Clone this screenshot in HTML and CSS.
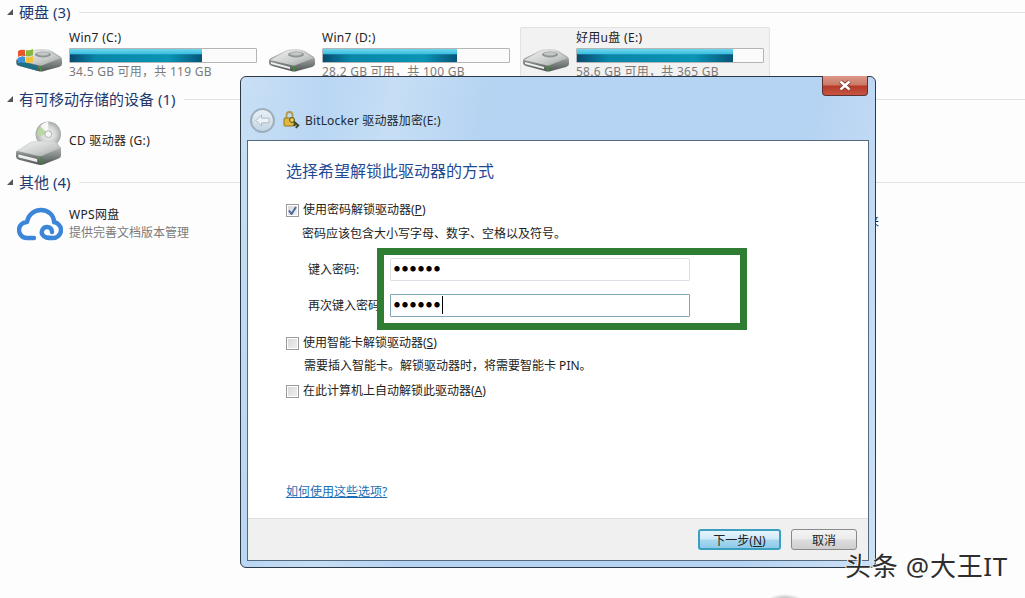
FILE: index.html
```html
<!DOCTYPE html>
<html lang="zh-CN">
  <head>
    <meta charset="UTF-8" />
    <title>BitLocker 驱动器加密(E:)</title>
    <link rel="stylesheet" href="styles.css">
  </head>
  <body>
    <svg class="defs" width="0" height="0">
      <defs>
        <linearGradient id="driveTop" x1="0" y1="0" x2="1" y2="1">
          <stop offset="0" stop-color="#f4f5f5" />
          <stop offset="0.6" stop-color="#c9cdcc" />
          <stop offset="1" stop-color="#9aa09e" />
        </linearGradient>
        <linearGradient id="driveSide" x1="0" y1="0" x2="0" y2="1">
          <stop offset="0" stop-color="#d5d8d7" />
          <stop offset="1" stop-color="#4d5452" />
        </linearGradient>
        <radialGradient id="disc" cx="0.5" cy="0.5" r="0.5">
          <stop offset="0" stop-color="#fafafa" />
          <stop offset="0.6" stop-color="#d3d6d5" />
          <stop offset="1" stop-color="#a5aaa9" />
        </radialGradient>
        <symbol id="drive" viewBox="0 0 46 24">
          <path d="M0 11 Q1 9 4 8 L18 1 Q22 0 27 0 Q32 0 36 2 L45 8 Q46 9 46 12 V15 Q46 17 43 18 L28 22 Q25 23 22 22 L3 17 Q0 16 0 14 Z" fill="url(#driveSide)" />
          <path d="M1 11 L18 2 Q23 1 30 1 L45 9 L27 16 Q25 17 22 16 Z" fill="url(#driveTop)" />
          <ellipse cx="27" cy="5.5" rx="8" ry="3" fill="#8f9593" />
          <ellipse cx="27" cy="4.8" rx="6" ry="1.8" fill="#c3c7c6" />
          <path d="M2 13 L21 18 V20 L2 15 Z" fill="#eef0ef" />
          <rect x="24" y="17" width="2" height="5" fill="#3d8c3a" />
        </symbol>
      </defs>
    </svg>

    <main class="explorer">
      <section class="group">
        <h2 class="group-head"><span class="arrow"></span><span class="group-label">硬盘 (3)</span></h2>
        <div class="drives">
          <div class="drive">
            <div class="drive-icon">
              <svg width="46" height="24"><use href="#drive" /></svg>
              <svg class="sysband" width="26" height="14" viewBox="0 0 26 14">
                <path d="M1 1 L22 7 V12 L1 6 Z" fill="#1f6f86" />
              </svg>
              <svg class="winlogo" width="17" height="16" viewBox="0 0 17 16">
                <path d="M1 3 Q4 1 8 2 L8 8 Q4 7 1 9 Z" fill="#e8562b" />
                <path d="M9 2 Q12 3 16 1 L16 7 Q12 9 9 8 Z" fill="#86b93c" />
                <path d="M1 10 Q4 8 8 9 L8 15 Q4 14 1 15 Z" fill="#3f93d8" />
                <path d="M9 9 Q12 10 16 8 L16 14 Q12 15 9 15 Z" fill="#f5c12e" />
              </svg>
            </div>
            <div class="drive-info">
              <div class="drive-name">Win7 (C:)</div>
              <div class="bar"><div class="bar-fill" style="width: 71%"></div></div>
              <div class="drive-sub">34.5 GB 可用，共 119 GB</div>
            </div>
          </div>
          <div class="drive">
            <div class="drive-icon"><svg width="46" height="24"><use href="#drive" /></svg></div>
            <div class="drive-info">
              <div class="drive-name">Win7 (D:)</div>
              <div class="bar"><div class="bar-fill" style="width: 72%"></div></div>
              <div class="drive-sub">28.2 GB 可用，共 100 GB</div>
            </div>
          </div>
          <div class="drive selected">
            <div class="drive-icon"><svg width="46" height="24"><use href="#drive" /></svg></div>
            <div class="drive-info">
              <div class="drive-name">好用u盘 (E:)</div>
              <div class="bar"><div class="bar-fill" style="width: 84%"></div></div>
              <div class="drive-sub">58.6 GB 可用，共 365 GB</div>
            </div>
          </div>
        </div>
      </section>

      <section class="group">
        <h2 class="group-head"><span class="arrow"></span><span class="group-label">有可移动存储的设备 (1)</span></h2>
        <div class="drives cd-row">
          <div class="drive-icon cd-icon">
            <svg width="47" height="45" viewBox="0 0 47 45">
              <circle cx="33" cy="13" r="13" fill="url(#disc)" />
              <path d="M33 13 L25 5 A11.5 11.5 0 0 0 22 15 Z" fill="#b9d8a3" />
              <path d="M33 13 L25 5 A13 13 0 0 1 33 0 Z" fill="#f7f7f7" />
              <circle cx="33" cy="13" r="3.5" fill="#f4f4f4" stroke="#aab0ae" />
              <path d="M0 31 Q1 29 4 28 L15 21 Q18 20 22 20 L36 20 Q40 20 42 22 L46 27 V35 Q46 37 43 38 L28 44 Q25 45 22 44 L3 39 Q0 38 0 36 Z" fill="url(#driveSide)" />
              <path d="M1 30 L15 22 Q18 21 22 21 L36 21 Q39 21 41 23 L45 27 L27 35 Q25 36 22 35 Z" fill="url(#driveTop)" />
              <path d="M2 33 L22 38 V42 L2 37 Z" fill="#eef0ef" stroke="#5d6462" stroke-width="0.7" />
              <rect x="25" y="37" width="2" height="6" fill="#3d8c3a" />
            </svg>
          </div>
          <div class="drive-name">CD 驱动器 (G:)</div>
        </div>
      </section>

      <section class="group">
        <h2 class="group-head"><span class="arrow"></span><span class="group-label">其他 (4)</span></h2>
        <div class="drives wps-row">
          <div class="drive-icon wps-icon">
            <svg width="46" height="34" viewBox="0 0 46 34">
              <path d="M17 31 H10 C5 31 2 27 2 23 C2 18 6 15 10 15 C11 8 17 3 24 3 C31 3 37 8 37 15 C41 16 44 19 44 23 C44 28 40 31 36 31 C31 31 27 31 25 27 C24 24 26 20 30 20 C33 20 35 22 35 25" fill="none" stroke="#3b86d8" stroke-width="4.4" stroke-linecap="round" stroke-linejoin="round" />
            </svg>
          </div>
          <div class="drive-info">
            <div class="drive-name">WPS网盘</div>
            <div class="drive-sub">提供完善文档版本管理</div>
          </div>
        </div>
      </section>
    </main>

    <span class="behind-text">来</span>
    <div class="smudge"></div>

    <div class="dialog">
      <button class="close" aria-label="关闭">
        <svg width="14" height="11" viewBox="0 0 14 11">
          <path d="M2.5 1.5 L11.5 9.5 M11.5 1.5 L2.5 9.5" stroke="#6b2a22" stroke-width="4" />
          <path d="M2.5 1.5 L11.5 9.5 M11.5 1.5 L2.5 9.5" stroke="#fff" stroke-width="2.6" />
        </svg>
      </button>
      <div class="dialog-head">
        <span class="back">
          <svg width="15" height="13" viewBox="0 0 16 14">
            <path d="M7 1 L1 7 L7 13 L7 9.5 L15 9.5 L15 4.5 L7 4.5 Z" fill="#eef3f7" stroke="#a9b8c4" />
          </svg>
        </span>
        <svg class="key" width="18" height="18" viewBox="0 0 18 18">
          <path d="M3.5 7 V4 A3 3 0 0 1 9.5 4 V7" fill="none" stroke="#b59a4c" stroke-width="1.8" />
          <rect x="1" y="7" width="10" height="8" rx="1" fill="#e0b83e" stroke="#8f7520" />
          <path d="M9 9 L16 15 M13 12 L11 15 M15 14 L13 17" stroke="#3f4a30" stroke-width="2" />
          <circle cx="9" cy="9" r="2.4" fill="#ecd064" stroke="#5d4c14" />
        </svg>
        <span class="dialog-title">BitLocker 驱动器加密(E:)</span>
      </div>
      <div class="dialog-page">
        <div class="dialog-body">
          <h1 class="dialog-heading">选择希望解锁此驱动器的方式</h1>

          <label class="check-row first">
            <span class="check checked">
              <svg width="9" height="9" viewBox="0 0 9 9"><path d="M1 4.5 L3.5 8 L8 1" fill="none" stroke="#4a6a9c" stroke-width="2" /></svg>
            </span>
            <span>使用密码解锁驱动器(<u>P</u>)</span>
          </label>
          <p class="hint">密码应该包含大小写字母、数字、空格以及符号。</p>

          <div class="field">
            <span class="field-label">键入密码:</span>
            <div class="input">●●●●●●</div>
          </div>
          <div class="field">
            <span class="field-label">再次键入密码:</span>
            <div class="input active">●●●●●●<span class="caret"></span></div>
          </div>

          <label class="check-row second">
            <span class="check"></span>
            <span>使用智能卡解锁驱动器(<u>S</u>)</span>
          </label>
          <p class="hint hint-card">需要插入智能卡。解锁驱动器时，将需要智能卡 PIN。</p>
          <label class="check-row third">
            <span class="check"></span>
            <span>在此计算机上自动解锁此驱动器(<u>A</u>)</span>
          </label>

          <a class="help" href="#">如何使用这些选项?</a>

          <div class="green-box"></div>
        </div>
        <div class="dialog-foot">
          <button class="btn primary">下一步(<u>N</u>)</button>
          <button class="btn">取消</button>
        </div>
      </div>
    </div>

    <div class="watermark">头条 @大王IT</div>
  </body>
</html>
```

FILE: styles.css
```css
* {
  box-sizing: border-box;
}

body {
  margin: 0;
  width: 1025px;
  height: 598px;
  overflow: hidden;
  position: relative;
  background: #fdfdfd;
  color: #222;
  font-family: "Noto Sans", "Noto Sans CJK SC", sans-serif;
  font-size: 12px;
}

.defs {
  position: absolute;
}

/* explorer behind the dialog */
.explorer {
  padding-top: 3px;
}

.group-head {
  display: flex;
  align-items: center;
  height: 18px;
  margin: 0;
  padding-left: 7px;
  font-size: 15px;
  font-weight: 400;
  color: #1f3a70;
}

.group-head::after {
  content: "";
  flex: 1;
  height: 1px;
  margin-left: 9px;
  background: #dfe3e8;
}

.group-label {
  margin-top: -2px;
}

.arrow {
  width: 0;
  height: 0;
  margin-right: 6px;
  border-left: 6px solid transparent;
  border-bottom: 6px solid #555;
}

.drives {
  display: flex;
  height: 69px;
  padding: 6px 0 0 16px;
}

.drive {
  display: flex;
  flex: none;
  width: 253px;
  height: 63px;
}

.drive.selected {
  width: 250px;
  margin-left: -2px;
  padding-left: 2px;
  background: #f2f2f2;
  border: 1px solid #e2e2e2;
  border-radius: 2px;
}

.drive-icon {
  position: relative;
  display: flex;
  flex: none;
  width: 46px;
  height: 24px;
  margin-top: 22px;
  margin-right: 7px;
}

.selected .drive-icon {
  margin-top: 21px;
}

.winlogo {
  position: absolute;
  left: 1px;
  top: -1px;
}

.sysband {
  position: absolute;
  left: 0;
  top: 10px;
}

.drive-info {
  flex: none;
  width: 188px;
  padding-top: 2px;
}

.selected .drive-info {
  padding-top: 1px;
}

.drive-name {
  height: 17px;
  margin-bottom: 2px;
  line-height: 17px;
  font-size: 12px;
  letter-spacing: 0.3px;
  color: #222;
}

.drive-sub {
  height: 17px;
  line-height: 18px;
  font-size: 12px;
  letter-spacing: 0.25px;
  color: #7a7a7a;
}

.bar {
  height: 15px;
  border: 1px solid #b5b5b5;
  border-radius: 1px;
  background: #fbfbfb;
}

.bar-fill {
  height: 100%;
  background:
    linear-gradient(180deg, #6fd6ee 0, #3fc0df 35%, rgba(63, 192, 223, 0) 45%),
    linear-gradient(90deg, #074a70 0, #0a86a8 20%, #0a94b5 75%, #06547a 100%);
}

.cd-row {
  height: 65px;
  padding-top: 13px;
}

.cd-row .drive-icon {
  margin-top: 0;
  height: 45px;
}

.cd-row .drive-name {
  margin-top: 11px;
}

.wps-row {
  height: 60px;
  padding-top: 15px;
}

.wps-row .drive-icon {
  margin-top: 1px;
  margin-left: 1px;
  margin-right: 6px;
}

.wps-row .drive-info {
  padding-top: 0;
}

.wps-row .drive-name {
  margin-bottom: 1px;
}

.wps-row .drive-sub {
  letter-spacing: 0;
}

.behind-text {
  position: absolute;
  left: 867px;
  top: 214px;
  line-height: 16px;
  color: #222;
}

.smudge {
  position: absolute;
  left: 768px;
  top: 594px;
  width: 34px;
  height: 12px;
  border-radius: 50%;
  background: radial-gradient(closest-side, #a5a5a5, rgba(165, 165, 165, 0));
}

/* dialog window */
.dialog {
  position: absolute;
  left: 240px;
  top: 76px;
  width: 636px;
  height: 492px;
  display: flex;
  flex-direction: column;
  padding: 0 6px 6px;
  background:
    linear-gradient(100deg, #c9e0f5 0, #b9d6f3 12%, #c6def5 22%, #b5d3f2 35%, #b5d3f2 80%, #cde1f6 100%);
  border: 1px solid #2c3a48;
  border-radius: 6px;
}

.close {
  position: absolute;
  top: -1px;
  right: 7px;
  width: 46px;
  height: 20px;
  padding: 0;
  display: flex;
  align-items: center;
  justify-content: center;
  border: 1px solid #5c3330;
  border-top: 0;
  border-radius: 0 0 4px 4px;
  background: linear-gradient(180deg, #dc9a8a 0, #cb7a68 45%, #b8392a 55%, #c65542 100%);
}

.dialog-head {
  display: flex;
  align-items: center;
  height: 63px;
  padding: 23px 0 0 3px;
  flex: none;
}

.back {
  width: 25px;
  height: 25px;
  display: flex;
  align-items: center;
  justify-content: center;
  border: 2px solid #9db0bf;
  border-radius: 50%;
  background: linear-gradient(180deg, #e9f1f7, #c3d5e3);
}

.key {
  margin-left: 8px;
}

.dialog-title {
  margin-left: 4px;
  font-size: 12px;
  letter-spacing: 0.15px;
  color: #1c2a36;
}

.dialog-page {
  flex: 1;
  display: flex;
  flex-direction: column;
  border: 1px solid #566a7e;
  background: #fff;
}

.dialog-body {
  position: relative;
  flex: 1;
  padding: 19px 0 0 38px;
}

.dialog-heading {
  margin: 0;
  height: 22px;
  line-height: 22px;
  font-size: 16px;
  font-weight: 400;
  color: #1f4a94;
}

.check-row {
  display: flex;
  align-items: center;
  height: 16px;
  line-height: 16px;
  color: #222;
}

.check-row.first {
  margin-top: 20px;
}

.check-row.second {
  margin-top: 18px;
}

.check-row.third {
  margin-top: 9px;
}

.check {
  flex: none;
  display: flex;
  align-items: center;
  justify-content: center;
  width: 13px;
  height: 13px;
  margin-right: 4px;
  border: 1px solid #9a9b9b;
  background: linear-gradient(135deg, #d6d6d6, #f2f2f2);
  box-shadow: inset 0 0 0 1px #fff;
}

.hint {
  margin: 8px 0 0 16px;
  height: 16px;
  line-height: 16px;
  color: #222;
}

.hint-card {
  margin: 7px 0 0 18px;
}

.field {
  display: flex;
  align-items: center;
  height: 23px;
  margin-top: 16px;
}

.field + .field {
  margin-top: 13px;
}

.field-label {
  width: 104px;
  padding-left: 22px;
  padding-bottom: 2px;
  white-space: nowrap;
}

.input {
  width: 300px;
  height: 23px;
  padding-left: 3px;
  line-height: 21px;
  font-size: 6px;
  letter-spacing: 2px;
  color: #000;
  border: 1px solid #dbdfe6;
  border-radius: 1px;
}

.input.active {
  border-color: #7fa6b8;
}

.caret {
  display: inline-block;
  width: 1px;
  height: 18px;
  vertical-align: middle;
  background: #000;
}

.help {
  position: absolute;
  left: 38px;
  top: 341px;
  color: #1a6fb4;
}

.green-box {
  position: absolute;
  left: 129px;
  top: 107px;
  width: 370px;
  height: 82px;
  border: 7px solid #2f7d32;
  pointer-events: none;
}

.dialog-foot {
  flex: none;
  display: flex;
  justify-content: flex-end;
  gap: 10px;
  align-items: center;
  height: 42px;
  padding-right: 11px;
  background: #f0f0f0;
  border-top: 1px solid #dfdfdf;
}

.btn {
  width: 66px;
  height: 21px;
  padding: 0;
  font: inherit;
  color: #222;
  border: 1px solid #8a8a8a;
  border-radius: 3px;
  background: linear-gradient(180deg, #f3f3f3 0, #ebebeb 48%, #dcdcdc 52%, #cfcfcf 100%);
}

.btn.primary {
  width: 83px;
  border: 2px solid #3c9fc0;
  background: linear-gradient(180deg, #e6f4fb 0, #cfe9f7 48%, #a9d8f0 52%, #8dcaea 100%);
}

.watermark {
  position: absolute;
  left: 845px;
  top: 549px;
  font-size: 26px;
  line-height: 34px;
  letter-spacing: 0.7px;
  white-space: nowrap;
  color: #2e2e2e;
  text-shadow: 1px 1px 0 #fff, -1px 0 0 #fff;
}
```
